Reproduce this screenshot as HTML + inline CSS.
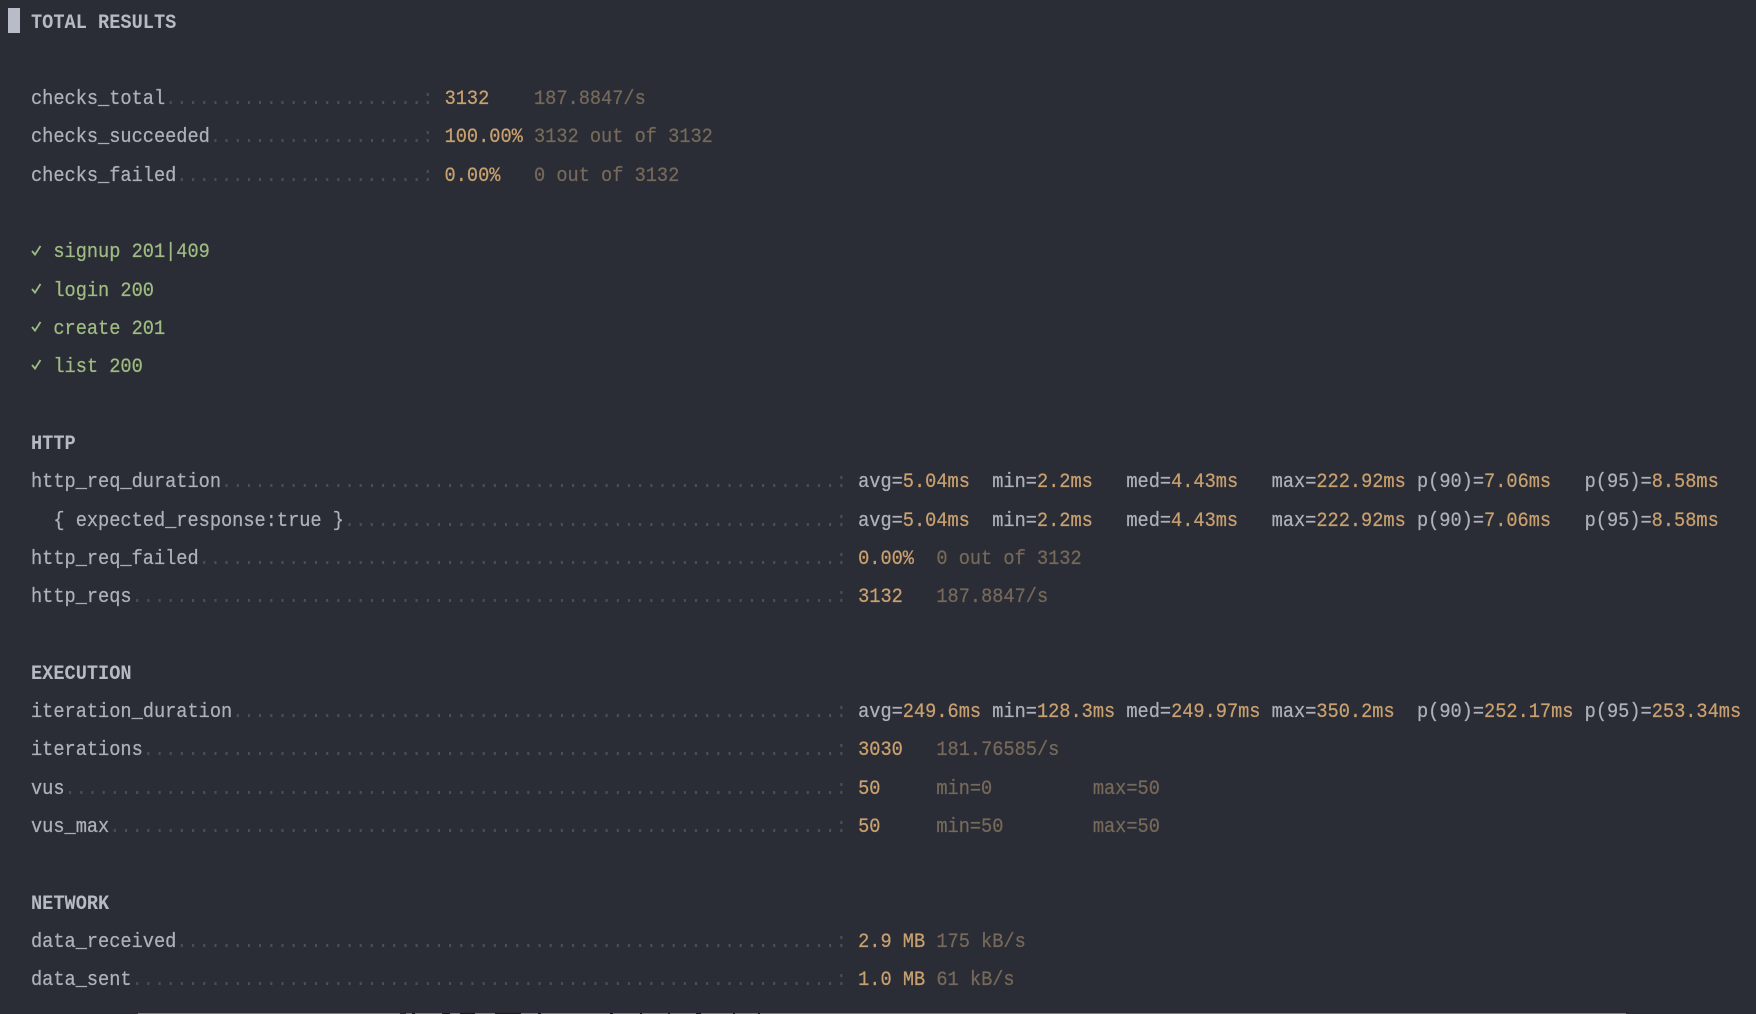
<!DOCTYPE html>
<html>
<head>
<meta charset="utf-8">
<style>
html,body{margin:0;padding:0;background:#2a2d35;}
body{width:1756px;height:1014px;overflow:hidden;position:relative;}
pre{position:absolute;left:31px;top:4.5px;margin:0;font-family:"Liberation Mono",monospace;font-size:20.4px;line-height:38.32px;color:#adb1bc;transform:scaleX(.9134);transform-origin:0 0;filter:blur(.35px);-webkit-text-stroke:.25px currentColor;}
b{color:#b6bac4;font-weight:700;-webkit-text-stroke:0}
i{font-style:normal;color:#4b4e56;-webkit-text-stroke:0}
u{text-decoration:none;color:#c9a06f}
s{text-decoration:none;color:#77695a}
em{font-style:normal;color:#a0bb82}
#cur{position:absolute;left:8px;top:8px;width:12px;height:25px;background:#b8bcc8}
#ln{position:absolute;left:138px;top:1013px;width:1488px;height:1px;background:#7d7e80}
#ln2{position:absolute;left:400px;top:1013px;width:400px;height:1px;background:linear-gradient(90deg,#2a2d35 0 6px,#7d7e80 6px 12px,#1b1c1f 12px 15px,#7d7e80 15px 42px,#1b1c1f 42px 50px,#7d7e80 50px 60px,#1b1c1f 60px 75px,#7d7e80 75px 95px,#1b1c1f 95px 121px,#7d7e80 121px 138px,#1b1c1f 138px 141px,#7d7e80 141px 210px,#1b1c1f 210px 213px,#7d7e80 213px 240px,#1b1c1f 240px 242px,#7d7e80 242px 268px,#1b1c1f 268px 270px,#7d7e80 270px 296px,#1b1c1f 296px 301px,#7d7e80 301px 333px,#1b1c1f 333px 335px,#7d7e80 335px 358px,#1b1c1f 358px 360px,#7d7e80 360px 400px)}
svg{position:absolute;left:29px;width:14px;height:14px;overflow:visible;filter:blur(.25px)}
svg path{fill:none;stroke:#a0bb82;stroke-width:1.8}
</style>
</head>
<body>
<div id="cur"></div>
<pre><b>TOTAL RESULTS</b>

checks_total<i>.......................:</i> <u>3132</u>    <s>187.8847/s</s>
checks_succeeded<i>...................:</i> <u>100.00%</u> <s>3132 out of 3132</s>
checks_failed<i>......................:</i> <u>0.00%</u>   <s>0 out of 3132</s>

<em>  signup 201|409</em>
<em>  login 200</em>
<em>  create 201</em>
<em>  list 200</em>

<b>HTTP</b>
http_req_duration<i>.......................................................:</i> avg=<u>5.04ms</u>  min=<u>2.2ms</u>   med=<u>4.43ms</u>   max=<u>222.92ms</u> p(90)=<u>7.06ms</u>   p(95)=<u>8.58ms</u>
  { expected_response:true }<i>............................................:</i> avg=<u>5.04ms</u>  min=<u>2.2ms</u>   med=<u>4.43ms</u>   max=<u>222.92ms</u> p(90)=<u>7.06ms</u>   p(95)=<u>8.58ms</u>
http_req_failed<i>.........................................................:</i> <u>0.00%</u>  <s>0 out of 3132</s>
http_reqs<i>...............................................................:</i> <u>3132</u>   <s>187.8847/s</s>

<b>EXECUTION</b>
iteration_duration<i>......................................................:</i> avg=<u>249.6ms</u> min=<u>128.3ms</u> med=<u>249.97ms</u> max=<u>350.2ms</u>  p(90)=<u>252.17ms</u> p(95)=<u>253.34ms</u>
iterations<i>..............................................................:</i> <u>3030</u>   <s>181.76585/s</s>
vus<i>.....................................................................:</i> <u>50</u>     <s>min=0         max=50</s>
vus_max<i>.................................................................:</i> <u>50</u>     <s>min=50        max=50</s>

<b>NETWORK</b>
data_received<i>...........................................................:</i> <u>2.9 MB</u> <s>175 kB/s</s>
data_sent<i>...............................................................:</i> <u>1.0 MB</u> <s>61 kB/s</s></pre>
<svg style="top:242.5px" viewBox="0 0 14 14"><path d="M3 8l3 3.6L11.5 3"/></svg>
<svg style="top:280.8px" viewBox="0 0 14 14"><path d="M3 8l3 3.6L11.5 3"/></svg>
<svg style="top:319.1px" viewBox="0 0 14 14"><path d="M3 8l3 3.6L11.5 3"/></svg>
<svg style="top:357.4px" viewBox="0 0 14 14"><path d="M3 8l3 3.6L11.5 3"/></svg>
<div id="ln"></div>
<div id="ln2"></div>
</body>
</html>
